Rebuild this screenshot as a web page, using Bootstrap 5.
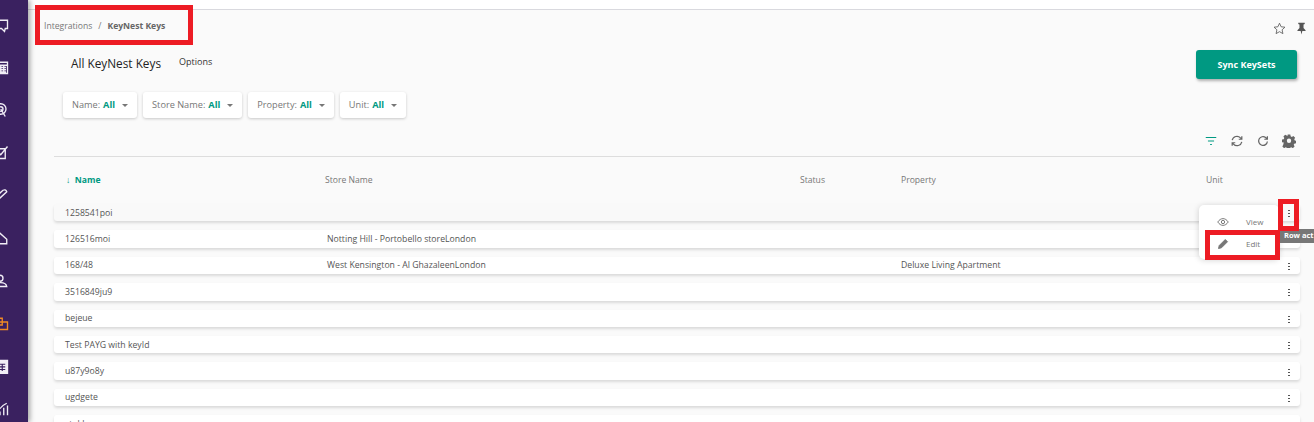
<!DOCTYPE html>
<html lang="en"><head><meta charset="utf-8"><title>KeyNest Keys</title>
<link href="https://cdn.jsdelivr.net/npm/bootstrap@5.3.0/dist/css/bootstrap.min.css" rel="stylesheet">
<style>
html,body{height:100%;overflow:hidden}
body{font-family:"Open Sans","Noto Sans",sans-serif;font-size:9px;color:#555;background:#fafafa;width:1314px;height:422px;position:relative}
.side-rail{width:28px;height:422px;background:#3a2160;box-shadow:2px 0 5px rgba(0,0,0,.35);flex:none;overflow:hidden;padding-top:17.5px;position:relative;z-index:2;gap:27.67px}
.side-rail svg{width:15px;height:15px;margin-left:-6px;flex:none;fill:none;stroke:#f1eef6;stroke-width:1.8}
.side-rail svg.on{stroke:#f08a24}
.main-pane{flex:1;height:422px;overflow:hidden}
.top-strip{height:10px;background:#fff;border-bottom:1px solid #d9d9de}
.crumb-bar{height:31px;padding:10px 0 0 16px;font-size:8.6px;color:#777}
.crumb-bar b{font-weight:700;color:#666}
.crumb-sep{margin:0 6px}
.head-tools{gap:9px;padding:2px 6px 0 0}
.head-tools svg{width:13px;height:13px}
.title-row{height:50px;padding:12px 17px 0 43px}
.page-title{font-size:11.8px;font-weight:500;color:#222;margin:3px 0 0}
.opt-link{font-size:9px;color:#333;margin:2px 0 0 18px}
.sync-btn{width:101px;height:29px;background:#009982;border:0;border-radius:3px;color:#fff;font-size:9px;font-weight:700;box-shadow:1px 2px 3px rgba(0,0,0,.3);margin-top:-3px}
.filter-row{padding:1px 0 0 35px;gap:6px}
.filter-pill{height:26px;background:#fff;border-radius:3px;box-shadow:0 1px 3px rgba(0,0,0,.2);padding:0 9px;display:flex;align-items:center;color:#777;font-size:9.2px}
.filter-pill b{color:#009982;margin-left:3px;font-weight:700}
.filter-pill i{display:inline-block;border-left:3px solid transparent;border-right:3px solid transparent;border-top:3px solid #777;margin-left:7px}
.tool-row{height:39px;margin:0 14px 0 26px;border-bottom:1px solid #ddd;padding:0 4px 0 0;gap:12px}
.tool-row svg{width:14px;height:14px;fill:none;stroke:#666;stroke-width:1.4}
.grid-row{display:grid;grid-template-columns:273px 473px 101px 305px 1fr;margin:0 14px 0 26px;align-items:center}
.grid-head{height:47px;color:#777;font-size:8.6px}
.grid-head>div:first-child{padding-left:12px;color:#009982;font-weight:700}
.grid-head>div:nth-child(2){margin-left:-2px}
.data-row{height:17.4px;background:#fff;border-radius:3px;box-shadow:0 2px 3px rgba(0,0,0,.13);margin-bottom:9px;font-size:8.7px;color:#555;padding-top:1px}
.data-row.dim{background:#f9f9f9}
.data-row>div:first-child{padding-left:11px}
.kebab{width:2px;height:8px;margin-right:10px;background:radial-gradient(circle,#555 1px,transparent 1.1px) 0 0/2px 3px}
.row-menu{position:absolute;left:1199px;top:205px;width:80px;height:54px;background:#fff;border-radius:5px;box-shadow:0 1px 6px rgba(0,0,0,.18);z-index:3;padding-top:6px}
.menu-line{height:22px;color:#777;font-size:8px;padding-left:18px}
.menu-line svg{width:12px;height:12px;margin-right:17px;fill:none;stroke:#777;stroke-width:1.3}
.tip-box{position:absolute;left:1279px;top:229px;width:35px;height:14px;overflow:hidden;white-space:nowrap;background:#777;color:#fff;font-size:7.5px;font-weight:700;padding:1px 0 0 5px;z-index:3}
.red-mark{position:absolute;border:5px solid #ed1c24;z-index:4}
.mark-a{left:35px;top:5px;width:158px;height:40px}
.mark-b{left:1278px;top:199px;width:21px;height:32px}
.mark-c{left:1205px;top:230px;width:75px;height:30px}
</style></head>
<body>
<div class="d-flex">
<nav class="side-rail d-flex flex-column">
<svg viewBox="0 0 20 20"><path d="M1 3h17v11h-3l-1 4-4-4H1z"/></svg>
<svg viewBox="0 0 20 20"><path d="M1 3h17v15H1zM1 7h17M5 10h11M5 13h11M5 16h11M9 7v11M13 7v11"/></svg>
<svg viewBox="0 0 20 20"><circle cx="9" cy="8" r="7"/><circle cx="9" cy="8" r="3"/><path d="M9 8l6 10"/></svg>
<svg viewBox="0 0 20 20"><path d="M1 5h14v13H1zM5 9l4 4 9-11"/></svg>
<svg viewBox="0 0 20 20"><path d="M3 18l14-13c-1-3-3-3-5-2L1 13c-1 3 0 5 2 5z"/></svg>
<svg viewBox="0 0 20 20"><path d="M1 17V9l7-6 9 8v6z"/></svg>
<svg viewBox="0 0 20 20"><circle cx="8" cy="7" r="4"/><path d="M1 18c0-7 15-7 16 0z"/></svg>
<svg class="on" viewBox="0 0 20 20"><path d="M1 3h10v9H1zM6 8h12v10H6zM3 10h5M8 13l-2-3"/></svg>
<svg viewBox="0 0 20 20"><path fill="#f1eef6" d="M1 2h17v17H1z"/><path stroke="#3a2160" stroke-width="1.500" d="M4 7h11M4 10.500h11M4 14h11M7 7v9M11 7v9"/></svg>
<svg viewBox="0 0 20 20" stroke-width="3"><path d="M3 19v-7M8 19v-5M13 19V9M18 19V6"/><path stroke-width="1.500" d="M2 9l5 2 5-5 5-3"/></svg>
</nav>
<div class="main-pane">
<div class="top-strip"></div>
<div class="crumb-bar d-flex justify-content-between">
<div><span>Integrations</span><span class="crumb-sep">/</span><b>KeyNest Keys</b></div>
<div class="head-tools d-flex">
<svg viewBox="0 0 16 16" fill="none" stroke="#555"><path d="M8 1.500l2 4.400 4.700.5-3.500 3.200 1 4.700L8 11.900 3.800 14.300l1-4.700L1.300 6.400 6 5.900z"/></svg>
<svg viewBox="0 0 16 16" fill="#555"><path d="M4 1h8v1.500l-1.500.5v4.500L13 10v1H9l-1 4.500L7 11H3v-1l2.500-2.500V3L4 2.500z"/></svg>
</div></div>
<div class="title-row d-flex align-items-start">
<h1 class="page-title">All KeyNest Keys</h1><span class="opt-link">Options</span>
<button class="sync-btn ms-auto" type="button">Sync KeySets</button>
</div>
<div class="filter-row d-flex">
<div class="filter-pill">Name:<b>All</b><i></i></div>
<div class="filter-pill">Store Name:<b>All</b><i></i></div>
<div class="filter-pill">Property:<b>All</b><i></i></div>
<div class="filter-pill">Unit:<b>All</b><i></i></div>
</div>
<div class="tool-row d-flex justify-content-end align-items-end pb-2">
<svg viewBox="0 0 16 16" style="stroke:#009982"><path d="M2 4h12M4.500 8h7M7 12h2"/></svg>
<svg viewBox="0 0 16 16"><path d="M2.500 7A5.500 5.500 0 0 1 12 4.500L13.500 6M13.500 9A5.500 5.500 0 0 1 4 11.500L2.500 10M13.500 2.500V6H10M2.500 13.500V10H6"/></svg>
<svg viewBox="0 0 16 16"><path d="M13 8.500A5 5 0 1 1 11 4l2 2M13 2.500V6H9.500"/></svg>
<svg viewBox="0 0 16 16" style="stroke:none;fill:#666"><path fill-rule="evenodd" d="M6.500 1h3l.4 2 1.300.6 1.800-1 2 2-1 1.800.6 1.300 1.400.3v3l-2 .4-.6 1.300 1 1.800-2 2-1.800-1-1.300.6-.4 2h-3l-.4-2-1.300-.6-1.800 1-2-2 1-1.800L2 10l-2-.4v-3l2-.4.600-1.300-1-1.800 2-2 1.800 1L6.100 3zM8 5.500a2.500 2.500 0 1 0 0 5 2.500 2.500 0 0 0 0-5z" transform="translate(0 -.3)"/></svg>
</div>
<div class="grid-row grid-head"><div>&#8595;&nbsp; Name</div><div>Store Name</div><div>Status</div><div>Property</div><div>Unit</div></div>
<div class="grid-row data-row dim"><div>1258541poi</div><div></div><div></div><div></div><div><span class="kebab d-block ms-auto"></span></div></div>
<div class="grid-row data-row"><div>126516moi</div><div>Notting Hill - Portobello storeLondon</div><div></div><div></div><div></div></div>
<div class="grid-row data-row"><div>168/48</div><div>West Kensington - Al GhazaleenLondon</div><div></div><div>Deluxe Living Apartment</div><div><span class="kebab d-block ms-auto"></span></div></div>
<div class="grid-row data-row"><div>3516849ju9</div><div></div><div></div><div></div><div><span class="kebab d-block ms-auto"></span></div></div>
<div class="grid-row data-row"><div>bejeue</div><div></div><div></div><div></div><div><span class="kebab d-block ms-auto"></span></div></div>
<div class="grid-row data-row"><div>Test PAYG with keyId</div><div></div><div></div><div></div><div><span class="kebab d-block ms-auto"></span></div></div>
<div class="grid-row data-row"><div>u87y9o8y</div><div></div><div></div><div></div><div><span class="kebab d-block ms-auto"></span></div></div>
<div class="grid-row data-row"><div>ugdgete</div><div></div><div></div><div></div><div><span class="kebab d-block ms-auto"></span></div></div>
<div class="grid-row data-row"><div>stukbe</div><div></div><div></div><div></div><div></div></div>
</div></div>
<div class="row-menu">
<div class="menu-line d-flex align-items-center"><svg viewBox="0 0 16 16"><path d="M1 8c4-6 10-6 14 0-4 6-10 6-14 0z"/><circle cx="8" cy="8" r="2.200"/></svg>View</div>
<div class="menu-line d-flex align-items-center"><svg viewBox="0 0 16 16" style="fill:#777"><path d="M2 14l1-4 8-8 3 3-8 8z"/></svg>Edit</div>
</div>
<div class="tip-box">Row act</div>
<div class="red-mark mark-a"></div><div class="red-mark mark-b"></div><div class="red-mark mark-c"></div>
<script src="https://cdn.jsdelivr.net/npm/bootstrap@5.3.0/dist/js/bootstrap.bundle.min.js"></script>
</body></html>
